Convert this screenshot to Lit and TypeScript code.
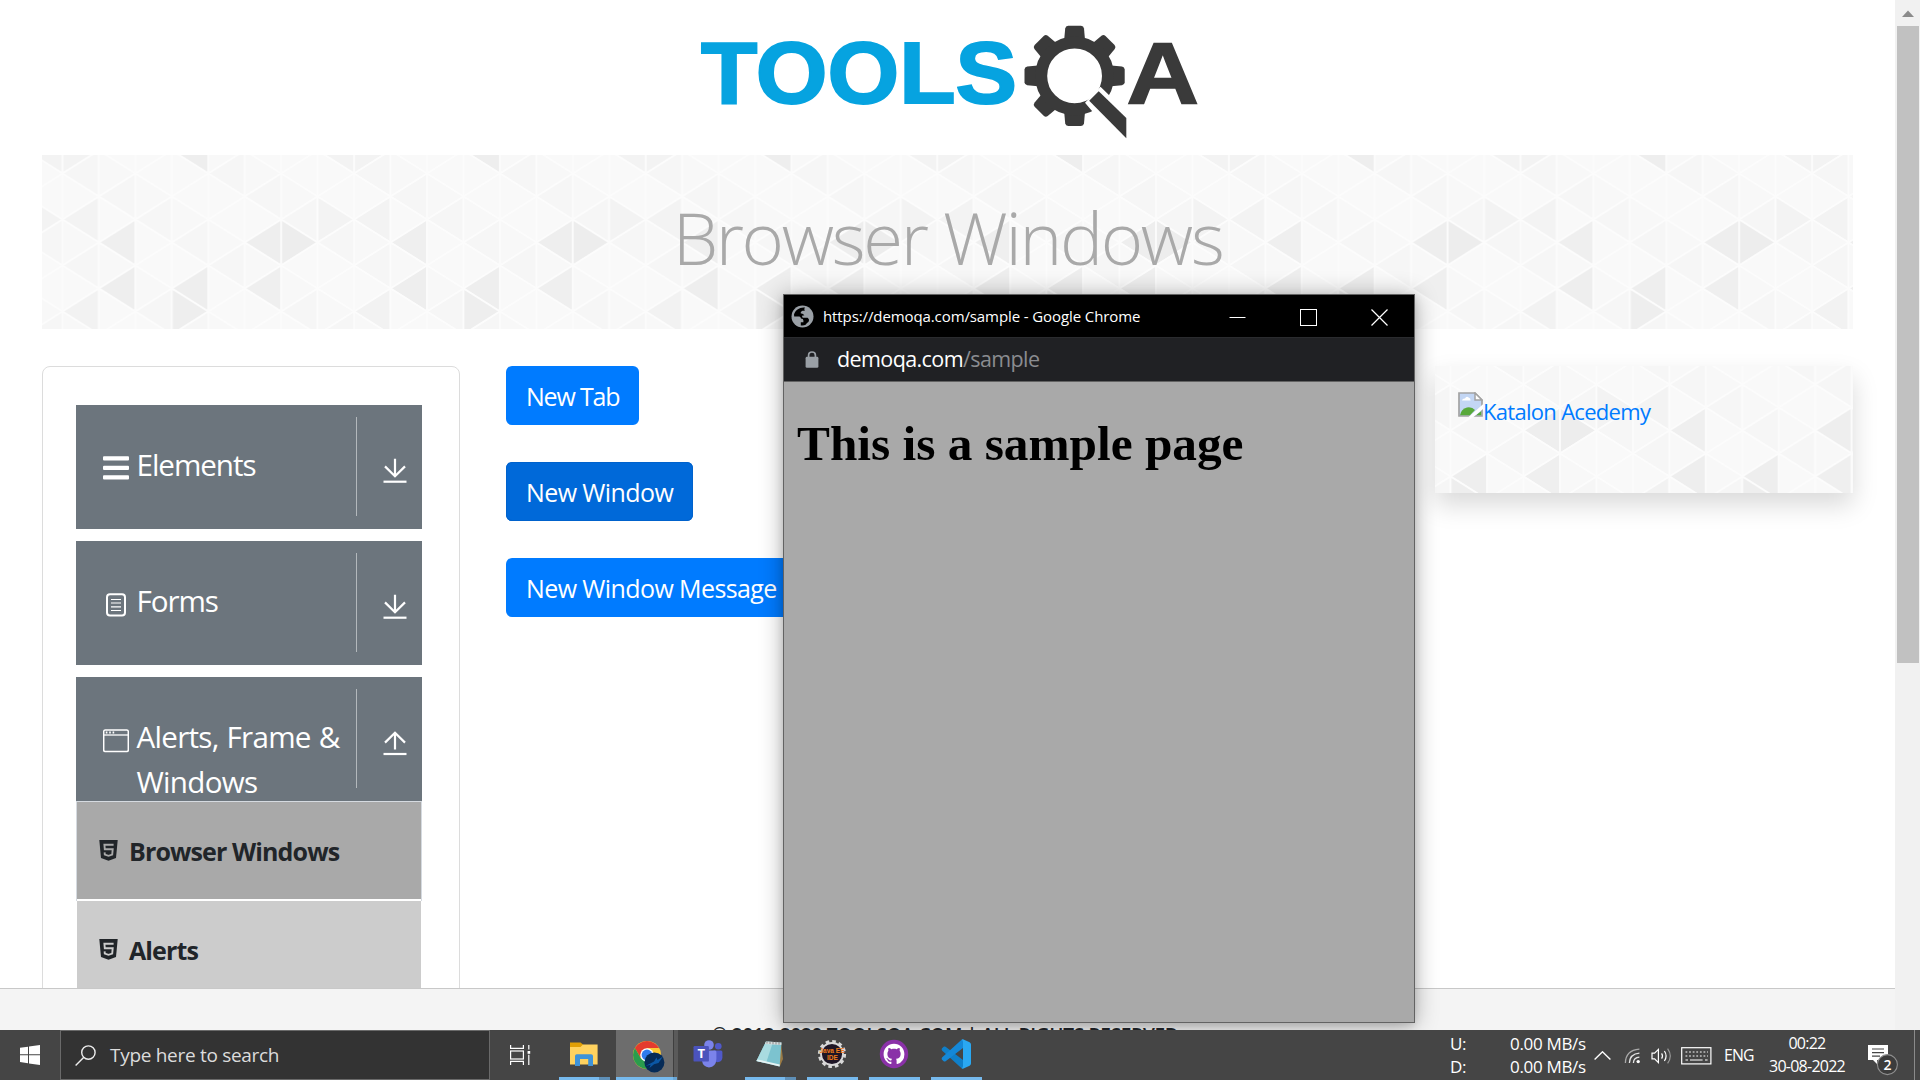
import { LitElement, html, svg, css } from "lit";
import { customElement, property } from "lit/decorators.js";

/* ---------- triangle backdrop ---------- */

const COL = 36.45;
const HALF = 23;
const TILE_H = 16 * HALF;

// strip, direction, apex row -> shade
const SHADES: Record<string, string> = {
  "7L-1": "#f3f3f3", "0R-1": "#f3f3f3", "3L-1": "#eeeeee",
  "7R2": "#f3f3f3", "0L2": "#f3f3f3",
  "1L3": "#efefef", "5L3": "#eeeeee", "6R3": "#ededed",
  "1L5": "#eeeeee", "3L5": "#eeeeee", "5L5": "#efefef",
  "3R6": "#eeeeee", "0L6": "#f2f2f2",
};

function triangles() {
  const out = [];
  for (let h = -2; h <= 14; h++) {
    for (let s = 0; s < 8; s++) {
      // even lines hold even rows, odd lines odd rows
      const left = (s + h) % 2 === 0;
      const dir = left ? "L" : "R";
      const x0 = s * COL;
      const x1 = x0 + COL;
      const y = h * HALF + 18.5;
      const soft = (s * 7 + (h + 4) * 5) % 4;
      const fill = SHADES[`${s}${dir}${h}`] ??
        (left ? ["#f6f6f6", "#f8f8f8", "#f9f9f9", "#f7f7f7"][soft] : ["#fafafa", "#f9f9f9", "#fbfbfb", "#f8f8f8"][soft]);
      const pts = left
        ? `${x0},${y} ${x1},${y - HALF} ${x1},${y + HALF}`
        : `${x1},${y} ${x0},${y - HALF} ${x0},${y + HALF}`;
      out.push(svg`<polygon points=${pts} fill=${fill} stroke="#fcfcfc" stroke-width="1.8"></polygon>`);
    }
  }
  return out;
}

@customElement("triangle-backdrop")
export class TriangleBackdrop extends LitElement {
  @property({ type: Number }) dx = 0;
  @property({ type: Number }) dy = 0;
  static styles = css`
    :host { position: absolute; inset: 0; overflow: hidden; }
    svg { display: block; width: 100%; height: 100%; }
  `;
  render() {
    return html`<svg>
      <defs>
        <pattern id="tri" patternUnits="userSpaceOnUse" width=${COL * 8} height=${TILE_H}
          patternTransform="translate(${this.dx} ${this.dy})">${triangles()}</pattern>
      </defs>
      <rect width="100%" height="100%" fill="url(#tri)"></rect>
    </svg>`;
  }
}

/* ---------- icons ---------- */

const logo = html`<svg class="logo" width="540" height="140" viewBox="0 0 540 140">
  <text x="21" y="93" textLength="316" lengthAdjust="spacingAndGlyphs" class="logo-word" fill="#06a3e0" stroke="#06a3e0" stroke-width="2">TOOLS</text>
  <g fill="#3a3a3a">
    ${[0, 45, 90, 135, 180, 225, 270, 315].map(
      (a) => svg`<path transform="rotate(${a} 394.6 65.9)" d="M384 32 L385.2 18.5 Q385.6 16 388.2 15.8 H401 Q403.6 16 404 18.5 L405.2 32 Z"></path>`
    )}
  </g>
  <circle cx="394.6" cy="65.9" r="33.4" fill="none" stroke="#3a3a3a" stroke-width="12"></circle>
  <polygon points="405,92.7 420.5,76.7 432,88 455,110 455,136 425,118 413.5,102.7" fill="#fff"></polygon>
  <polygon points="409.2,90.7 418.7,81.3 446.3,108 446.3,128.3" fill="#3a3a3a"></polygon>
  <text x="446.5" y="93" textLength="72.5" lengthAdjust="spacingAndGlyphs" class="logo-word" fill="#3a3a3a" stroke="#3a3a3a" stroke-width="1.5">A</text>
</svg>`;

const burger = html`<svg width="26" height="24" viewBox="0 0 26 24" fill="#fff">
  <rect y="0.3" width="26" height="4.2" rx="1"></rect><rect y="9.8" width="26" height="4.2" rx="1"></rect><rect y="19.3" width="26" height="4.2" rx="1"></rect></svg>`;
const form = html`<svg width="26" height="26" viewBox="0 -1 26 26" fill="none" stroke="#fff">
  <rect x="4" y="1.2" width="18" height="21.4" rx="3" stroke-width="2"></rect>
  <path d="M8 6.5H18M8 10H18M8 13.8H18M8 17.5H18" stroke-width="1.2"></path></svg>`;
const frame = html`<svg width="26" height="26" viewBox="0 -1 26 26" fill="none" stroke="#fff">
  <rect x="0.7" y="1" width="24.6" height="21.6" rx="1.5" stroke-width="1.5"></rect>
  <path d="M1 6H25" stroke-width="1.3"></path><path d="M2.8 3.5H4.4M6.2 3.5H7.8M9.6 3.5H11.2" stroke-width="1.8"></path></svg>`;
const arrowDown = html`<svg width="24" height="26" viewBox="0 0 24 26" fill="none" stroke="#fff" stroke-width="2.2">
  <path d="M12 0.8V17.5M2 8.4L12 18.2L22 8.4"></path><path d="M0.5 23.7H23.5"></path></svg>`;
const arrowUp = html`<svg width="24" height="26" viewBox="0 0 24 26" fill="none" stroke="#fff" stroke-width="2.2">
  <path d="M12 19.6V3M2 12.6L12 2.8L22 12.6"></path><path d="M0.5 24H23.5"></path></svg>`;
const html5 = html`<svg width="19" height="21" viewBox="0 0 19 21">
  <path d="M0.3 0H18.7L17 18L9.5 20.8L2 18Z" fill="#212529"></path>
  <path d="M14.6 4.7H5.4L5.8 9.3H13.7L13.2 14.6L9.5 15.8L5.8 14.6L5.6 12.3" fill="none" stroke="var(--cut)" stroke-width="1.9"></path></svg>`;
const brokenImage = html`<svg width="25" height="25" viewBox="0 0 25 25">
  <path d="M1 1H17L24 8V24H1Z" fill="#c3d6f4" stroke="#a3a3a3" stroke-width="1.7"></path>
  <path d="M4 8.5Q4.5 6.3 7 6.6Q8.2 3.8 10.6 5.4Q12.6 5.6 12.6 8.5Z" fill="#fff"></path>
  <path d="M2 23.2Q3 17 9 15.4Q14 14.5 17 18L12 23.2Z" fill="#58a93a"></path>
  <path d="M18 23.2L23.2 19V23.2Z" fill="#58a93a"></path>
  <path d="M10.5 25L25 12.3V17L15.5 25Z" fill="#fff"></path>
  <path d="M17 1V8H24Z" fill="#fff" stroke="#a3a3a3" stroke-width="1.5"></path></svg>`;
const globe = html`<svg width="23" height="23" viewBox="0 0 23 23">
  <circle cx="11.5" cy="11.5" r="11" fill="#9aa0a6"></circle>
  <path d="M14 2.6C9.4 1.8 4 5 3 9.6L3.2 11.6H8.4Q9.8 12 10 13.6Q12.4 13.6 12.4 15.6V17.2H9.8V20.4Q12.6 20.8 14.6 19.8Q16 17.8 17.4 17Q19 14.6 16.6 12.8H11.8Q10.6 11.8 11.4 10.4H13.4Q12 8.2 9.8 8.6Q9 6.8 11.4 5.8H13.8Q12.6 3.8 14 2.6Z" fill="#000"></path></svg>`;
const lock = html`<svg width="14" height="17" viewBox="0 0 14 17">
  <rect x="0.6" y="5.8" width="12.8" height="11" rx="1.4" fill="#9aa0a6"></rect>
  <path d="M3.6 6.5V4.2Q3.6 1 7 1Q10.4 1 10.4 4.2V6.5" fill="none" stroke="#9aa0a6" stroke-width="1.7"></path></svg>`;
const minimize = html`<svg width="17" height="17" viewBox="0 0 17 17"><path d="M0.5 8.5H16.5" stroke="#fff"></path></svg>`;
const maximize = html`<svg width="17" height="17" viewBox="0 0 17 17"><rect x="0.5" y="0.5" width="16" height="16" fill="none" stroke="#fff"></rect></svg>`;
const close = html`<svg width="17" height="17" viewBox="0 0 17 17"><path d="M0.5 0.5L16.5 16.5M16.5 0.5L0.5 16.5" stroke="#fff" stroke-width="1.2"></path></svg>`;

const windowsLogo = html`<svg width="20" height="20" viewBox="0 0 20 20" fill="#fff">
  <path d="M0 2.8L8 1.7V9.3H0ZM9 1.5L20 0V9.3H9ZM0 10.3H8V18.2L0 17.1ZM9 10.3H20V20L9 18.4Z"></path></svg>`;
const magnifier = html`<svg width="21" height="21" viewBox="0 0 21 21" fill="none" stroke="#eee" stroke-width="1.4">
  <circle cx="13.4" cy="7.6" r="6.7"></circle><path d="M8.6 12.4L0.6 20.4"></path></svg>`;
const taskView = html`<svg width="21" height="20" viewBox="0 0 21 20" fill="none" stroke="#fff" stroke-width="1.2">
  <path d="M0.6 0V3.4H13.4V0M0.6 20V16.4H13.4V20"></path><rect x="0.6" y="6" width="12.8" height="8"></rect>
  <path d="M18.8 0V4.6M18.8 9.8V20"></path><rect x="17.6" y="6" width="2.6" height="2.8" fill="#fff" stroke="none"></rect></svg>`;

const folder = html`<svg width="30" height="30" viewBox="0 0 30 30">
  <path d="M1 3.4H11.5L14 5.6V10H1Z" fill="#e09f06"></path>
  <path d="M1 8H11.5L14 5.4H28.6V25.6H1Z" fill="#ffd25f"></path>
  <path d="M6 27V17Q6 15.3 7.8 15.3H22Q24 15.3 24 17V27H19.2V20H11V27Z" fill="#3f93d8"></path></svg>`;
const chrome = html`<svg width="34" height="34" viewBox="0 0 34 34">
  <circle cx="15" cy="16" r="14" fill="#fcc934"></circle>
  <path d="M2.9 9A14 14 0 0 1 27.1 9H15L9 19.5Z" fill="#e33b2e"></path>
  <path d="M2.9 9A14 14 0 0 0 15 30L21 19.5H9Z" fill="#2a9c4d"></path>
  <circle cx="15" cy="16" r="6.8" fill="#fff"></circle><circle cx="15" cy="16" r="5.4" fill="#2f7bed"></circle>
  <circle cx="22.4" cy="23.4" r="10" fill="#062b57"></circle>
  <path d="M13.5 27L22 22.6L24.5 18.5L25.5 21L31 17.5L26.5 24L22 25.2L17.5 29L18.6 25.8Z" fill="#0b57a5"></path></svg>`;
const teams = html`<svg width="30" height="28" viewBox="0 0 30 28">
  <circle cx="25.3" cy="6.2" r="3.3" fill="#5059c9"></circle>
  <path d="M20.5 10.5H28Q29.4 10.5 29.4 12V17.5Q29 22 24.6 22.2Q21.5 22 20.5 20Z" fill="#5059c9"></path>
  <circle cx="16" cy="5" r="4.8" fill="#7b83eb"></circle>
  <path d="M9 10.5H22Q23.4 10.5 23.4 12V19Q23 27 16 27.4Q10 27 9 21Z" fill="#7b83eb"></path>
  <rect x="0.5" y="6" width="15.4" height="15.6" rx="1.2" fill="#4b53bc"></rect>
  <text x="8.2" y="18.4" text-anchor="middle" class="teams-t" fill="#fff">T</text></svg>`;
const notepad = html`<svg width="30" height="30" viewBox="0 0 30 30">
  <path d="M26 4L28 20L25 27L22 26Z" fill="#9b7b45"></path>
  <path d="M11 2.5L26.5 3.5L24.6 27.5L1.4 22Z" fill="#7cc3cf"></path>
  <path d="M11 2.5L18 3L11 24.3L1.4 22Z" fill="#a9dbe0"></path>
  <path d="M1.4 22L24.6 27.5L24.8 25.4L2.6 20.4Z" fill="#e6f3f4"></path>
  <path d="M11 2.5L26.5 3.5L26.3 6L10 5Z" fill="#d8dcdc"></path>
  <path d="M12 2L12 4.5M15 2V5M18 2.3V5.2M21 2.5V5.4M24 2.7V5.6" stroke="#777" stroke-width="0.8"></path></svg>`;
const javaIde = html`<svg width="30" height="30" viewBox="0 0 30 30">
  <circle cx="15" cy="15" r="12.6" fill="none" stroke="#d8d8d8" stroke-width="3" stroke-dasharray="3.6 2.98"></circle>
  <circle cx="15" cy="15" r="11" fill="#1e1626" stroke="#d8d8d8" stroke-width="1.8"></circle>
  <text x="15" y="14.4" text-anchor="middle" class="java" textLength="25" lengthAdjust="spacingAndGlyphs">Java EE</text>
  <text x="15.5" y="21.2" text-anchor="middle" class="java" textLength="11" lengthAdjust="spacingAndGlyphs">IDE</text></svg>`;
const github = html`<svg width="30" height="30" viewBox="0 0 30 30">
  <circle cx="15" cy="15" r="14.2" fill="#8a31a8"></circle>
  <g transform="translate(4.6 4.8) scale(1.3)">
    <path fill="#fff" d="M8 0C3.58 0 0 3.58 0 8c0 3.54 2.29 6.53 5.47 7.59.4.07.55-.17.55-.38 0-.19-.01-.82-.01-1.49-2.01.37-2.53-.49-2.69-.94-.09-.23-.48-.94-.82-1.13-.28-.15-.68-.52-.01-.53.63-.01 1.08.58 1.23.82.72 1.21 1.87.87 2.33.66.07-.52.28-.87.51-1.07-1.78-.2-3.64-.89-3.64-3.95 0-.87.31-1.59.82-2.15-.08-.2-.36-1.02.08-2.12 0 0 .67-.21 2.2.82.64-.18 1.32-.27 2-.27s1.36.09 2 .27c1.53-1.04 2.2-.82 2.2-.82.44 1.1.16 1.92.08 2.12.51.56.82 1.27.82 2.15 0 3.07-1.87 3.75-3.65 3.95.29.25.54.73.54 1.48 0 1.07-.01 1.93-.01 2.2 0 .21.15.46.55.38A8.01 8.01 0 0 0 16 8c0-4.42-3.58-8-8-8z"></path>
  </g></svg>`;
const vscode = html`<svg width="30" height="30" viewBox="0 0 30 30">
  <path d="M1 9.2L3 7.6Q3.8 7.2 4.6 7.8L22 21V29.6Q20.8 29.6 20 28.8L1 11.4Q0.2 10.2 1 9.2Z" fill="#0f7fc9"></path>
  <path d="M1 20.8L3 22.4Q3.8 22.8 4.6 22.2L22 9V0.4Q20.8 0.4 20 1.2L1 18.6Q0.2 19.8 1 20.8Z" fill="#1488d8"></path>
  <path d="M20.5 0.8L22 0.3L28.6 3.2Q30 4 30 5.4V24.6Q30 26 28.6 26.8L22 29.7L20.5 29.2Q22 29 22 27V3Q22 1 20.5 0.8Z" fill="#2aa8f2"></path></svg>`;

const chevron = html`<svg width="17" height="9" viewBox="0 0 17 9"><path d="M0.6 8.4L8.5 0.8L16.4 8.4" fill="none" stroke="#fff" stroke-width="1.4"></path></svg>`;
const wifi = html`<svg width="17" height="17" viewBox="0 0 17 17" fill="none" stroke="#e4e4e4" stroke-width="1.3">
  <circle cx="14.2" cy="14.6" r="1.7" fill="#fff" stroke="none"></circle>
  <path d="M9.4 16Q9.6 10.6 15.4 10.2M5.4 16Q5.8 7 15.4 6.2"></path><path d="M1.4 16Q1.6 3.4 15.4 2.2" stroke="#aaa"></path></svg>`;
const speaker = html`<svg width="22" height="18" viewBox="0 0 22 18" fill="none" stroke="#fff" stroke-width="1.2">
  <path d="M1 6.2H3.6L7.4 2.4V15.6L3.6 11.8H1Z"></path><path d="M10.6 6.4Q12.4 9 10.6 11.6M13.4 4Q16.8 9 13.4 14"></path>
  <path d="M16.6 1.6Q22 9 16.6 16.4" stroke="#999"></path></svg>`;
const keyboard = html`<svg width="31" height="18" viewBox="0 0 31 18" fill="none" stroke="#fff" stroke-width="1.2">
  <rect x="0.7" y="0.7" width="29.2" height="16.2"></rect>
  <path d="M4.5 5H27M4.5 9H27" stroke-dasharray="1.8 1.8"></path><path d="M4.5 13H7M9 13H21.6M24 13H26.6"></path></svg>`;
const notice = html`<svg width="32" height="34" viewBox="0 0 32 34">
  <path d="M0 1H20V16H9V20L5 16H0Z" fill="#fff"></path>
  <path d="M4 5H16M4 8.6H16M4 12.2H12" stroke="#454545" stroke-width="1.2"></path>
  <circle cx="19.4" cy="20.6" r="10" fill="#3c3c3c" stroke="#8f8f8f" stroke-width="1.1"></circle>
  <text x="19.4" y="25.6" text-anchor="middle" class="badge">2</text></svg>`;

/* ---------- sidebar group ---------- */

@customElement("menu-group")
export class MenuGroup extends LitElement {
  @property() label = "";
  @property({ attribute: false }) icon: unknown;
  @property({ attribute: false }) arrow: unknown;
  static styles = css`
    :host { display: flex; box-sizing: border-box; height: 124px; background: #6c757d; color: #fff; padding: 12px 15px 13px 27px; overflow: hidden; }
    svg { display: block; }
    .icon { width: 33.5px; padding-top: 39px; flex: none; }
    .label { flex: 1; padding-top: 25px; font: 29.6px/45px "Open Sans", "Noto Sans", sans-serif; letter-spacing: -1.05px; white-space: pre-line; height: 87px; }
    :host([wide]) .label { letter-spacing: -0.72px; word-spacing: 0.9px; }
    .arrow { border-left: 1px solid #b3b8bc; padding: 41px 0 0 26px; width: 24px; flex: none; box-sizing: content-box; height: 58px; }
  `;
  render() {
    return html`<div class="icon">${this.icon}</div><div class="label">${this.label}</div><div class="arrow">${this.arrow}</div>`;
  }
}

/* ---------- page ---------- */

@customElement("app-root")
export class AppRoot extends LitElement {
  static styles = css`
    :host { display: block; position: relative; width: 1920px; height: 1080px; overflow: hidden; background: #fff; font-family: "Open Sans", "Noto Sans", sans-serif; color: #212529; }
    * { box-sizing: border-box; }
    svg { display: block; flex: none; }
    .screen { display: grid; grid-template-rows: 1030px 50px; height: 1080px; }
    .browser { display: grid; grid-template-columns: 1895px 25px; overflow: hidden; }
    .page { display: grid; grid-template-rows: 155px 174px 659px 42px; overflow: hidden; }

    .head { padding: 10px 0 0 680px; }
    .logo-word { font: bold 88px "Liberation Sans", Arial, sans-serif; }
    .banner { position: relative; margin: 0 42px; display: flex; justify-content: center; }
    .banner h1 { position: relative; margin: 0; font-size: 72.5px; font-weight: 300; line-height: 165px; color: #a9a9a9; letter-spacing: -2.35px; white-space: nowrap; }

    .main { display: grid; grid-template-columns: 418px 1fr 418px; column-gap: 46px; padding: 37px 42px 0; overflow: hidden; }
    .side { border: 1px solid #dcdcdc; border-radius: 8px; padding: 38px 37px 0 33px; display: flex; flex-direction: column; gap: 12px; height: 800px; }
    .list { border: 1px solid #d5dae0; margin-top: -12px; }
    .item { display: flex; align-items: center; gap: 11px; height: 97px; padding-left: 22px; background: #a9a9a9; --cut: #a9a9a9; font-size: 25px; font-weight: 700; letter-spacing: -0.88px; }
    .item + .item { background: #ccc; --cut: #ccc; margin: 2px -1px 0; padding-left: 22px; border: solid #fff; border-width: 0 1px; }
    .buttons { display: flex; flex-direction: column; align-items: flex-start; gap: 37px; }
    .btn { height: 59px; padding: 1px 20px 0; border: 0; border-radius: 6px; background: #007bff; color: #fff; font: 25px/58px "Open Sans", "Noto Sans", sans-serif; letter-spacing: -0.6px; white-space: nowrap; }
    .btn.short { letter-spacing: -1.2px; }
    .btn.hover { background: #0069d9; box-shadow: inset 0 0 0 1px #0062cc; }
    .ad { position: relative; height: 127px; box-shadow: 0 12px 24px rgba(0, 0, 0, 0.15); padding: 26px 23px; }
    .ad a { position: relative; display: flex; color: #007bff; font-size: 22px; line-height: 25px; letter-spacing: -0.7px; }
    .ad .alt { padding-top: 7px; }

    .foot { background: #f4f4f4; border-top: 1px solid #c8c8c8; display: flex; justify-content: center; overflow: hidden; }
    .foot span { font-size: 19px; font-weight: 600; line-height: 24px; padding-top: 34px; white-space: nowrap; letter-spacing: -0.3px; height: 70px; }

    .scroll { background: #f1f1f1; display: flex; flex-direction: column; align-items: center; }
    .scroll svg { margin: 10px 0 9px; }
    .thumb { width: 22px; height: 637px; background: #c1c1c1; }

    .popup { position: absolute; left: 783px; top: 294px; width: 632px; height: 729px; border: 1px solid #636363; background: #a9a9a9; box-shadow: 0 2px 22px rgba(0, 0, 0, 0.32), 0 3px 8px rgba(0, 0, 0, 0.12); display: flex; flex-direction: column; }
    .bar { height: 42px; flex: none; background: #000; color: #fff; display: flex; align-items: center; padding: 0 26px 0 7px; font-size: 15px; letter-spacing: -0.1px; white-space: nowrap; }
    .bar .title { flex: 1; padding: 0 0 1px 9px; }
    .wins { display: flex; gap: 54px; padding-top: 3px; }
    .url { height: 45px; flex: none; background: #202124; border-top: 1px solid #2a2b2e; border-bottom: 1px solid #636363; display: flex; align-items: center; gap: 18px; padding-left: 21px; color: #fff; font-size: 21.5px; letter-spacing: -0.6px; white-space: nowrap; }
    .url .text { padding-bottom: 3px; }
    .url .path { color: #8a8c90; }
    .popup h1 { margin: 34px 0 0 13px; font: bold 49.3px/56px "Liberation Serif", "Times New Roman", serif; color: #000; white-space: nowrap; }

    .taskbar { position: relative; z-index: 2; background: #454545; color: #fff; display: grid; grid-template-columns: 60px 430px 60px 443px 1fr; }
    .start { padding: 15px 0 0 20px; }
    .search { background: #333; border: 1px solid #6a6a6a; display: flex; align-items: center; gap: 14px; padding-left: 14px; font-size: 19px; letter-spacing: -0.3px; color: #dcdcdc; white-space: nowrap; }
    .tv { padding: 15px 0 0 20px; }
    .apps { display: grid; grid-template-columns: repeat(7, 62px); padding-left: 4px; }
    .app { display: grid; grid-template-rows: 47px 3px; justify-items: center; align-items: center; width: 62px; padding-right: 3px; }
    .line { width: 51px; height: 3px; background: #76b9ed; justify-self: start; margin-left: 5px; }
    .line.multi { background: linear-gradient(90deg, #76b9ed 40px, #5e8fb7 40px); }
    .line.none { background: none; }
    .app.active { padding: 0; justify-items: start; background: linear-gradient(90deg, #6d6d6d 57px, #3f3f3f 57px 58px, #5a5a5a 58px); }
    .app.active .line { margin-left: 0; width: 61px; background: linear-gradient(90deg, #76b9ed 57px, #6aa5d3 57px); }
    .app.active svg { margin: 4px 0 0 16px; }
    .app svg { margin-top: 1px; }
    .teams-t { font: bold 13px "Open Sans", sans-serif; }
    .java { font: bold 7.2px "Liberation Sans", sans-serif; fill: #f07d1a; }
    .badge { font: 600 14px "Open Sans", sans-serif; fill: #fff; }

    .tray { display: flex; justify-content: flex-end; white-space: nowrap; }
    .speed { display: grid; grid-template-columns: 60px 77px; grid-auto-rows: 22.5px; line-height: 23px; font-size: 17px; letter-spacing: -0.32px; padding-top: 2px; height: 50px; }
    .chev { padding: 21px 0 0 7px; width: 37px; }
    .wifi { padding: 17px 0 0 0; width: 27px; }
    .snd { padding: 17px 0 0; width: 30px; }
    .kbd { padding: 17px 0 0; width: 43px; }
    .lang { width: 30px; font-size: 15.8px; line-height: 50px; letter-spacing: -0.8px; }
    .clock { width: 106px; text-align: center; font-size: 16px; line-height: 23px; letter-spacing: -0.75px; padding-top: 2px; }
    .note { padding: 14px 0 0 8px; width: 55px; border-right: 1px solid #8a8a8a; }
    .peek { width: 5px; }
  `;

  private app(icon: unknown, line = "") {
    return html`<div class="app"><div>${icon}</div><div class="line ${line}"></div></div>`;
  }

  render() {
    return html`
      <div class="screen">
        <div class="browser">
          <div class="page">
            <div class="head">${logo}</div>
            <div class="banner">
              <triangle-backdrop .dx=${20.5} .dy=${0}></triangle-backdrop>
              <h1>Browser Windows</h1>
            </div>
            <div class="main">
              <div class="side">
                <menu-group label="Elements" .icon=${burger} .arrow=${arrowDown}></menu-group>
                <menu-group label="Forms" .icon=${form} .arrow=${arrowDown}></menu-group>
                <menu-group wide .label=${"Alerts, Frame &\nWindows"} .icon=${frame} .arrow=${arrowUp}></menu-group>
                <div class="list">
                  <div class="item">${html5}<span>Browser Windows</span></div>
                  <div class="item">${html5}<span>Alerts</span></div>
                </div>
              </div>
              <div class="buttons">
                <button class="btn short">New Tab</button>
                <button class="btn hover">New Window</button>
                <button class="btn">New Window Message</button>
              </div>
              <div class="ad">
                <triangle-backdrop .dx=${-93.7} .dy=${-23}></triangle-backdrop>
                <a>${brokenImage}<span class="alt">Katalon Acedemy</span></a>
              </div>
            </div>
            <div class="foot"><span>© 2013-2020 TOOLSQA.COM | ALL RIGHTS RESERVED.</span></div>
          </div>
          <div class="scroll">
            <svg width="12" height="7" viewBox="0 0 12 7"><path d="M0 7L6 0.5L12 7Z" fill="#8b8b8b"></path></svg>
            <div class="thumb"></div>
          </div>
        </div>

        <div class="taskbar">
          <div class="start">${windowsLogo}</div>
          <div class="search">${magnifier}<span>Type here to search</span></div>
          <div class="tv">${taskView}</div>
          <div class="apps">
            ${this.app(folder, "multi")}
            <div class="app active"><div>${chrome}</div><div class="line"></div></div>
            ${this.app(teams, "none")} ${this.app(notepad, "multi")} ${this.app(javaIde)} ${this.app(github)} ${this.app(vscode)}
          </div>
          <div class="tray">
            <div class="speed"><span>U:</span><span>0.00 MB/s</span><span>D:</span><span>0.00 MB/s</span></div>
            <div class="chev">${chevron}</div>
            <div class="wifi">${wifi}</div>
            <div class="snd">${speaker}</div>
            <div class="kbd">${keyboard}</div>
            <div class="lang">ENG</div>
            <div class="clock">00:22<br />30-08-2022</div>
            <div class="note">${notice}</div>
            <div class="peek"></div>
          </div>
        </div>
      </div>

      <div class="popup">
        <div class="bar">${globe}<span class="title">https://demoqa.com/sample - Google Chrome</span>
          <div class="wins">${minimize}${maximize}${close}</div></div>
        <div class="url">${lock}<span class="text">demoqa.com<span class="path">/sample</span></span></div>
        <h1>This is a sample page</h1>
      </div>
    `;
  }
}
